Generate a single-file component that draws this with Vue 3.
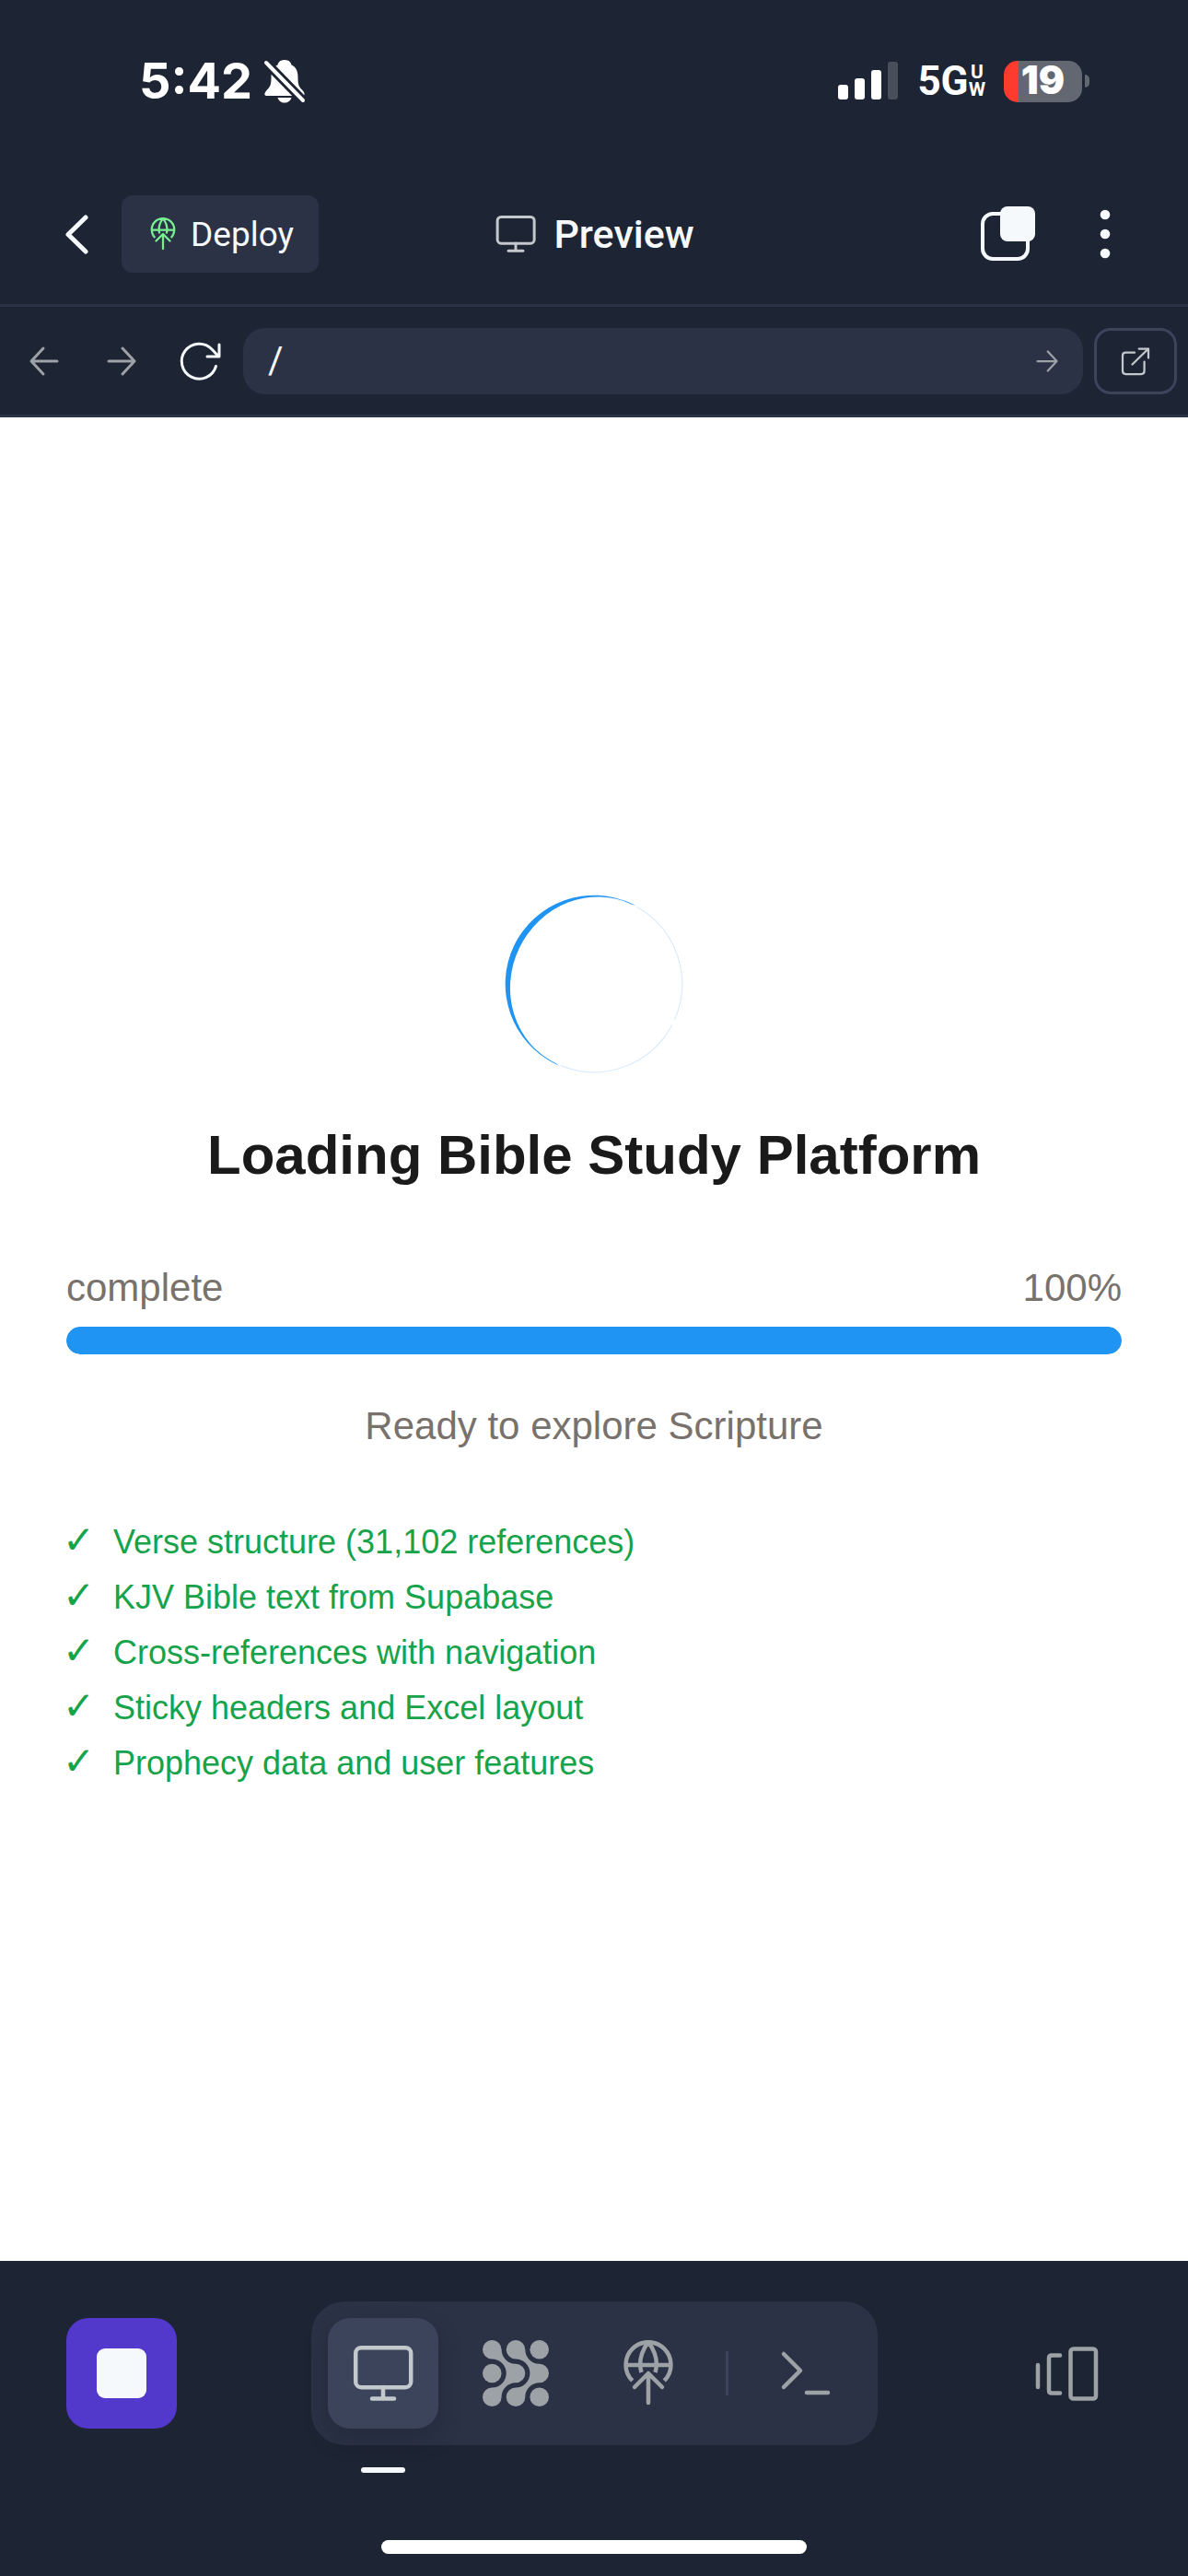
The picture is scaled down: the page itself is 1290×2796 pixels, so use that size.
<script setup>
import { ref } from 'vue'

const address = ref('/')
const progress = ref(100)
const steps = [
  'Verse structure (31,102 references)',
  'KJV Bible text from Supabase',
  'Cross-references with navigation',
  'Sticky headers and Excel layout',
  'Prophecy data and user features',
]
</script>

<template>
  <div class="screen">
    <svg width="0" height="0" class="defs" aria-hidden="true">
      <symbol id="monitor" viewBox="0 0 72 72">
        <g stroke-width="4.500">
          <rect x="6.200" y="8.200" width="60" height="43" rx="6" />
          <path d="M36 51V63M24 63.500H48" />
        </g>
      </symbol>
      <symbol id="globe" viewBox="0 0 72 72">
        <g stroke-width="4.500">
          <path d="M18.700 44A24.500 24.500 0 1 1 53.300 44M11.500 27H60.500M28.500 35C24 20 32 7 36 2.500C40 7 48 20 43.500 35" stroke-linecap="butt" />
          <path d="M36 68V37M21 51L36 36L51 51" />
        </g>
      </symbol>
      <symbol id="arrow" viewBox="0 0 48 48">
        <path d="M10 24H38M25 10L38 24L25 38" stroke-width="3" />
      </symbol>
    </svg>

    <div class="status">
      <div class="status-left">
        <span class="time">5:42</span>
        <svg class="bell" viewBox="0 0 46 48">
          <path fill="#fff" d="M23 1c-5 0-7 3-7.500 5.500C10 9 8.500 14 8.500 20c0 8-1 10-4.500 13.500C0 38 1 40 4 40H42c3 0 4-2 0-6.500C38.500 30 37.500 28 37.500 20c0-6-1.500-11-7-13.500C30 4 28 1 23 1zM15.500 42h15c-1 3.500-4 5.500-7.500 5.500s-6.500-2-7.500-5.500z" />
          <path d="M3 4L43 45" stroke="#1d2433" stroke-width="10" />
          <path d="M3 4L43 45" stroke="#fff" stroke-width="4" stroke-linecap="round" />
        </svg>
      </div>
      <div class="status-right">
        <svg class="signal" viewBox="0 0 66 42">
          <rect y="25" width="11" height="16" rx="3" fill="#fff" />
          <rect x="18" y="18" width="11" height="23" rx="3" fill="#fff" />
          <rect x="36" y="9" width="11" height="32" rx="3" fill="#fff" />
          <rect x="54" width="11" height="41" rx="3" fill="#494e5b" />
        </svg>
        <div class="network"><span class="gen">5G</span><span class="uw"><span>U</span><span>W</span></span></div>
        <div class="battery-wrap">
          <div class="battery">19</div>
          <i class="nub"></i>
        </div>
      </div>
    </div>

    <header class="header">
      <div class="header-side">
        <button class="plain back" aria-label="Back">
          <svg viewBox="0 0 48 48"><path d="M33 6L14 24.500L33 43" stroke-width="5" /></svg>
        </button>
        <button class="deploy"><svg><use href="#globe" /></svg>Deploy</button>
      </div>
      <h1 class="title"><svg><use href="#monitor" /></svg>Preview</h1>
      <div class="header-side end">
        <button class="plain tabs" aria-label="Tabs">
          <svg viewBox="0 0 60 60">
            <rect x="2" y="8" width="49" height="49" rx="11" stroke-width="4" />
            <rect x="21" y="0" width="38" height="38" rx="8" fill="#f5f9fc" stroke="none" />
          </svg>
        </button>
        <button class="plain more" aria-label="More">
          <svg viewBox="0 0 24 60">
            <g fill="#f5f9fc" stroke="none"><circle cx="12" cy="9" r="5.300" /><circle cx="12" cy="30" r="5.300" /><circle cx="12" cy="51" r="5.300" /></g>
          </svg>
        </button>
      </div>
    </header>

    <nav class="toolbar">
      <button class="plain tool dim" aria-label="Go back"><svg class="flip"><use href="#arrow" /></svg></button>
      <button class="plain tool dim" aria-label="Go forward"><svg><use href="#arrow" /></svg></button>
      <button class="plain tool" aria-label="Reload">
        <svg viewBox="0 0 48 48"><path d="M42.500 29.500A19 19 0 1 1 38 11L45 18.500M46 6V19H33" stroke-width="3" /></svg>
      </button>
      <div class="address">
        <input v-model="address" aria-label="Address" type="text" />
        <button class="plain go" aria-label="Go"><svg><use href="#arrow" /></svg></button>
      </div>
      <button class="external" aria-label="Open in new tab">
        <svg viewBox="0 0 36 36"><path d="M17 8.700H7.500Q4 8.700 4 12V28.500Q4 32 7.500 32H24Q27.600 32 27.600 28.500V18.700M21.700 4.500H32V14.500M32 4.500L14.500 21.500" stroke-width="2.250" /></svg>
      </button>
    </nav>

    <main class="page">
      <svg class="spinner" viewBox="-98 -98 196 196" role="img" aria-label="Loading">
        <g transform="rotate(25.500)">
          <path d="M6 -95.500A95.700 95.700 0 0 1 95.700 -3M95.600 4A95.700 95.700 0 0 1 6 95.500" fill="none" stroke="#d3e9fd" stroke-width="1" />
          <path d="M4 -96.300L0 -96.300A96.300 96.300 0 0 0 0 96.300L4 96.300L0 95.600A90 95.600 0 0 1 0 -95.600Z" fill="#2094f3" />
        </g>
      </svg>
      <h2>Loading Bible Study Platform</h2>
      <div class="progress">
        <div class="labels"><span>complete</span><span>{{ progress }}%</span></div>
        <div class="track"><div class="fill" :style="{ width: progress + '%' }"></div></div>
      </div>
      <p class="message">Ready to explore Scripture</p>
      <ul class="steps">
        <li v-for="step in steps" :key="step"><span class="check">✓</span>{{ step }}</li>
      </ul>
    </main>

    <footer class="footer">
      <div class="bar">
        <button class="square stop" aria-label="Stop"><i></i></button>
        <div class="dock">
          <button class="square active" aria-label="Preview"><svg><use href="#monitor" /></svg></button>
          <button class="square" aria-label="Agent">
            <svg viewBox="0 0 72 72">
              <g fill="#9da2a6" stroke="none">
                <circle cx="61.700" cy="10.300" r="10.300" /><circle cx="10.300" cy="36" r="10.300" /><circle cx="61.700" cy="61.700" r="10.300" />
                <path d="M20.600 10.300A15.400 15.400 0 0 0 36 25.700A10.300 10.300 0 0 1 36 46.300A15.400 15.400 0 0 0 20.600 61.700A10.300 10.300 0 1 1 10.300 51.400A15.400 15.400 0 0 0 10.300 20.600A10.300 10.300 0 1 1 20.600 10.300Z" />
                <path transform="translate(25.700 0)" d="M20.600 10.300A15.400 15.400 0 0 0 36 25.700A10.300 10.300 0 0 1 36 46.300A15.400 15.400 0 0 0 20.600 61.700A10.300 10.300 0 1 1 10.300 51.400A15.400 15.400 0 0 0 10.300 20.600A10.300 10.300 0 1 1 20.600 10.300Z" />
              </g>
            </svg>
          </button>
          <button class="square" aria-label="Deploy"><svg><use href="#globe" /></svg></button>
          <i class="divider"></i>
          <button class="square" aria-label="Console">
            <svg viewBox="0 0 72 72"><path d="M12 15L30 33L12 51M37 57H60" stroke-width="4.500" /></svg>
          </button>
        </div>
        <button class="square switcher" aria-label="Switch tabs">
          <svg viewBox="0 0 72 72"><g stroke-width="4.500"><path d="M5 27V51M29 16.500H20Q17 16.500 17 19.500V54.500Q17 57.500 20 57.500H29" /><rect x="40.500" y="9.500" width="27.500" height="54" rx="3" /></g></svg>
        </button>
      </div>
      <div class="home"></div>
    </footer>
  </div>
</template>

<style>
body { margin: 0; }
</style>

<style scoped>
.screen {
  min-height: 100vh;
  display: flex;
  flex-direction: column;
  background: #1d2433;
  color: #f5f9fc;
  font-family: Roboto, "Open Sans", sans-serif;
}
.screen *, .screen { box-sizing: border-box; }
.defs { position: absolute; }
svg { display: block; flex: none; fill: none; stroke: currentColor; stroke-linecap: round; stroke-linejoin: round; }
button { font: inherit; color: inherit; margin: 0; padding: 0; border: 0; background: none; display: flex; align-items: center; justify-content: center; }

.status { height: 178px; padding: 0 107px 0 151px; display: flex; justify-content: space-between; color: #fff; font-family: Inter, sans-serif; font-weight: 700; }
.status-left, .status-right { height: 176px; display: flex; align-items: center; }
.status-left { gap: 12px; }
.time { font-size: 54px; line-height: 60px; }
.bell { width: 46px; height: 48px; stroke: none; }
.signal { width: 66px; height: 42px; stroke: none; margin-right: 20px; }
.network { display: flex; align-items: center; margin-right: 20px; }
.gen { font: 700 44px/48px Roboto, sans-serif; }
.uw { display: flex; flex-direction: column; align-items: center; font: 700 21px/19px Roboto, sans-serif; }
.battery-wrap { display: flex; align-items: center; gap: 3px; }
.battery { width: 85px; height: 45px; border-radius: 15px; background: linear-gradient(90deg, #ff3b30 16px, #636772 16px); text-align: center; font-size: 42px; line-height: 42px; font-weight: 900; }
.nub { width: 5px; height: 14px; border-radius: 0 6px 6px 0; background: #636772; }

.header { height: 155px; padding: 0 60px; display: grid; grid-template-columns: 1fr auto 1fr; align-items: center; border-bottom: 3px solid #2b3245; }
.header-side { display: flex; align-items: center; }
.end { justify-content: flex-end; gap: 63px; padding-right: 18px; }
.back { width: 48px; height: 48px; margin-right: 24px; }
.back svg { width: 48px; height: 48px; }
.deploy { height: 84px; padding: 0 27px; gap: 12px; border-radius: 12px; background: #2b3245; font-size: 37px; }
.deploy svg { width: 36px; height: 36px; color: #78f092; }
.title { margin: 0; display: flex; align-items: center; gap: 17px; font-size: 43px; line-height: 60px; font-weight: 500; }
.title svg { width: 48px; height: 48px; color: #c2c8cc; }
.tabs svg { width: 60px; height: 60px; }
.more svg { width: 24px; height: 60px; }

.toolbar { height: 120px; padding: 0 12px; display: flex; align-items: center; border-bottom: 3px solid #2b3245; }
.tool { width: 84px; height: 72px; }
.tool:first-child { width: 72px; margin-right: 6px; }
.tool svg { width: 48px; height: 48px; }
.dim { color: #9da2a6; }
.flip { transform: scaleX(-1); }
.address { flex: 1; height: 72px; display: flex; align-items: center; margin-left: 6px; margin-right: 12px; padding: 0 21px 0 27px; border-radius: 24px; background: #2b3245; }
.address input { flex: 1; min-width: 0; height: 60px; padding: 0; border: 0; outline: 0; background: transparent; color: #f5f9fc; font: 400 40px/60px Roboto, sans-serif; }
.go svg { width: 36px; height: 36px; color: #9da2a6; }
.external { width: 90px; height: 72px; border: 3px solid #3c445c; border-radius: 18px; color: #c2c8cc; }
.external svg { width: 36px; height: 36px; }

.page { flex: 1; padding: 0 72px; display: flex; flex-direction: column; align-items: center; justify-content: center; background: #fff; font-family: "Liberation Sans", Arial, sans-serif; }
.spinner { width: 196px; height: 196px; stroke: none; }
.page h2 { margin: 46px 0 0; color: #1a1a1a; font-size: 60px; line-height: 84px; font-weight: 700; }
.progress { width: 100%; margin-top: 72px; color: #78716c; }
.labels { display: flex; justify-content: space-between; font-size: 42px; line-height: 60px; }
.track { height: 30px; margin-top: 12px; border-radius: 15px; background: #e5e7eb; overflow: hidden; }
.fill { height: 30px; border-radius: 15px; background: #2094f3; }
.message { margin: 48px 0 0; color: #78716c; font-size: 42px; line-height: 60px; }
.steps { width: 100%; margin: 70px 0 0; padding: 0 0 2px; list-style: none; color: #16a34a; font-size: 36px; line-height: 48px; display: flex; flex-direction: column; gap: 12px; }
.steps li { height: 48px; display: flex; align-items: baseline; gap: 24px; }
.check { width: 27px; font-family: "DejaVu Sans", sans-serif; font-size: 42px; font-weight: 700; display: flex; justify-content: center; }

.footer { height: 342px; padding: 44px 72px 24px; display: flex; flex-direction: column; align-items: center; justify-content: space-between; }
.bar { width: 100%; display: flex; align-items: center; justify-content: space-between; }
.square { position: relative; width: 120px; height: 120px; border-radius: 24px; color: #9da2a6; }
.square svg { width: 72px; height: 72px; }
.stop { background: #5338cc; }
.stop i { width: 54px; height: 54px; border-radius: 9px; background: #f5f9fc; }
.dock { height: 156px; padding: 18px; display: flex; align-items: center; gap: 24px; border-radius: 36px; background: #2b3245; }
.active { color: #c2c8cc; background: #3c445c; box-shadow: 0 12px 24px rgba(20, 24, 38, 0.25); }
.active::after { content: ""; position: absolute; left: 36px; top: 162px; width: 48px; height: 6px; border-radius: 3px; background: #f5f9fc; }
.divider { width: 3px; height: 48px; background: #3c445c; }
.home { width: 462px; height: 15px; border-radius: 8px; background: #fff; }
</style>
